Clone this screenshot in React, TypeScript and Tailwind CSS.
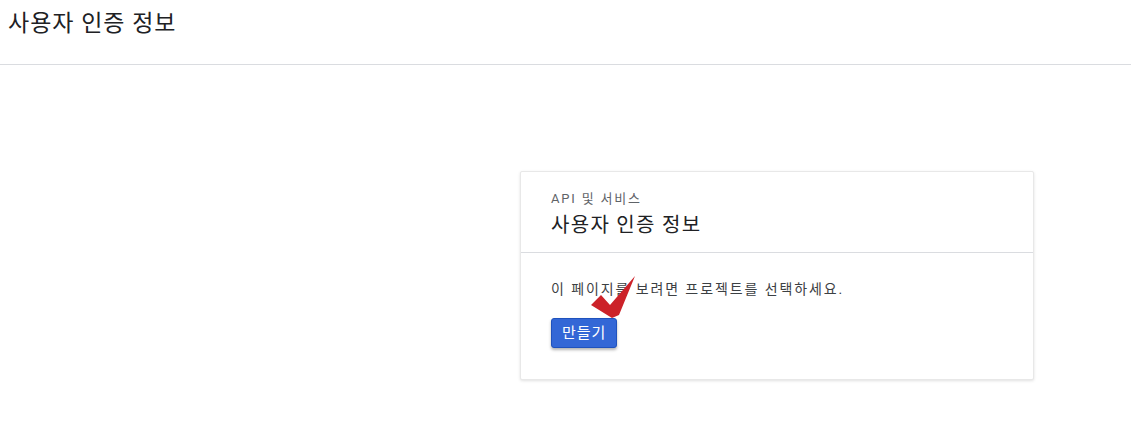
import React from 'react';

const FONT = "font-['Roboto','Noto_Sans_CJK_KR',sans-serif]";

const CheckMark: React.FC = () => (
  <svg className="absolute left-[64px] top-[22px]" width="52" height="48" viewBox="0 0 52 48">
    <polygon points="6,30 16,20 25,30 50,1 34,40 27,43" fill="#cc2229" />
  </svg>
);

const App: React.FC = () => {
  return (
    <div className={`${FONT} min-h-[440px] w-full bg-white`}>
      <header className="h-[65px] border-b border-[#dadce0] pl-2 pt-2">
        <h1 className="text-[23px] leading-8 tracking-[1px] text-[#202124]">사용자 인증 정보</h1>
      </header>
      <main className="pl-[520px] pt-[106px]">
        <section className="w-[514px] rounded-[2px] border border-[#e8e8e8] bg-white shadow-[0_1px_3px_rgba(0,0,0,0.12)]">
          <div className="border-b border-[#dadce0] px-[30px] pt-[17px] pb-[12px]">
            <p className="text-[13px] leading-5 tracking-[1.8px] text-[#5f6368]">API 및 서비스</p>
            <h2 className="mt-px text-[20px] leading-[30px] tracking-[1.3px] text-[#202124]">사용자 인증 정보</h2>
          </div>
          <div className="relative px-[30px] pt-[26px] pb-[31px]">
            <p className="text-[14px] leading-5 tracking-[1.9px] text-[#3c4043]">
              이 페이지를 보려면 프로젝트를 선택하세요.
            </p>
            <button className="mt-[19px] h-[30px] rounded-[3px] border border-[#1f52bd] bg-[#3367d6] px-[10px] text-[15px] tracking-[1px] text-white shadow-[0_2px_3px_rgba(0,0,0,0.3)]">
              만들기
            </button>
            <CheckMark />
          </div>
        </section>
      </main>
    </div>
  );
};

export default App;
